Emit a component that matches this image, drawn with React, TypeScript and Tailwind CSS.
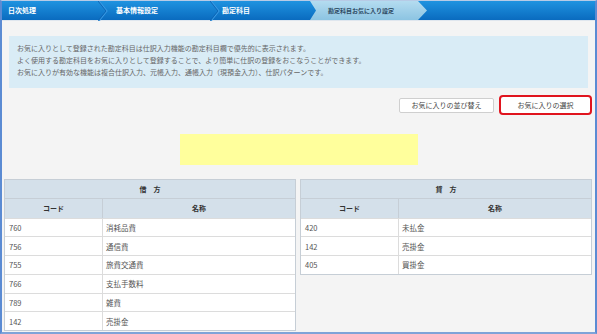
import React from "react";

const font = { fontFamily: '"Noto Sans CJK JP", "Noto Sans", sans-serif' };

function Sep() {
  return (
    <svg width="10" height="20" viewBox="0 0 10 20" className="shrink-0">
      <polyline points="1,0 9,10 1,20" fill="none" stroke="#3a9ae4" strokeWidth="1.2" />
      <polyline points="0,0 8,10 0,20" fill="none" stroke="#0a5fae" strokeWidth="0.8" />
    </svg>
  );
}

type Row = [string, string];

function AccTable({ title, rows }: { title: string; rows: Row[] }) {
  return (
    <div className="w-[292px] border border-[#c6ced6] bg-white text-[#444]">
      <div className="h-[19px] bg-[#d4e0ea] flex items-center justify-center text-[7px] font-bold text-[#333] border-b border-[#c6ced6]">
        {title}
      </div>
      <div className="h-[18.5px] bg-[#d4e0ea] flex text-[7px] font-bold text-[#333]">
        <div className="w-[98px] flex items-center justify-center border-r border-[#c6ced6]">コード</div>
        <div className="flex-1 flex items-center justify-center">名称</div>
      </div>
      {rows.map(([c, n], i) => (
        <div key={i} className="h-[18.75px] flex border-t border-[#dcdcdc] text-[7.5px] text-[#555]">
          <div className="w-[98px] flex items-center pl-[4px] border-r border-[#dcdcdc]">{c}</div>
          <div className="flex-1 flex items-center pl-[3px]">{n}</div>
        </div>
      ))}
    </div>
  );
}

export default function App() {
  const debit: Row[] = [
    ["760", "消耗品費"],
    ["756", "通信費"],
    ["755", "旅費交通費"],
    ["766", "支払手数料"],
    ["789", "雑費"],
    ["142", "売掛金"],
  ];
  const credit: Row[] = [
    ["420", "未払金"],
    ["142", "売掛金"],
    ["405", "買掛金"],
  ];
  return (
    <div style={font} className="w-[597px] h-[334px] overflow-hidden flex flex-col border-x-2 border-b-2 border-t border-x-[#5b8bd3] border-b-[#7fa3d8] border-t-[#b7cbe6] bg-[#f4f4f4]">
      <div className="h-[20px] shrink-0 flex items-stretch bg-gradient-to-b from-[#1f93e0] to-[#0a6bbf] text-white text-[7px] font-bold border-b border-[#dfe6ee]">
        <div className="w-[96px] pl-[6px] flex items-center">日次処理</div>
        <Sep />
        <div className="w-[102px] pl-[8px] flex items-center">基本情報設定</div>
        <Sep />
        <div className="w-[90px] pl-[2px] flex items-center">勘定科目</div>
        <div className="w-[117px] pl-[18px] flex items-center text-[6px] text-[#2d4a63] bg-gradient-to-b from-[#b4dcf0] to-[#8cc4e2] [clip-path:polygon(0_0,108px_0,117px_50%,108px_100%,0_100%,6px_50%)]">
          勘定科目お気に入り設定
        </div>
      </div>
      <div className="flex-1 flex flex-col">
        <div className="mt-[15px] mx-[7px] h-[52px] bg-[#d9ecf6] pt-[6px] pl-[8px] text-[7px] leading-[12px] text-[#666]">
          <div>お気に入りとして登録された勘定科目は仕訳入力機能の勘定科目欄で優先的に表示されます。</div>
          <div>よく使用する勘定科目をお気に入りとして登録することで、より簡単に仕訳の登録をおこなうことができます。</div>
          <div>お気に入りが有効な機能は複合仕訳入力、元帳入力、通帳入力（現預金入力）、仕訳パターンです。</div>
        </div>
        <div className="mt-[7px] flex justify-end items-center gap-[5px] pr-[3px]">
          <button className="w-[95px] h-[15px] bg-white border border-[#cfcfcf] rounded-[2px] text-[7px] text-[#444] flex items-center justify-center">
            お気に入りの並び替え
          </button>
          <button className="w-[93px] h-[20px] bg-white border-2 border-[#e0141e] rounded-[4px] text-[7px] text-[#444] flex items-center justify-center">
            お気に入りの選択
          </button>
        </div>
        <div className="mt-[19px] ml-[178px] w-[238px] h-[31px] bg-[#ffff9c]" />
        <div className="mt-[14px] ml-[2px] flex gap-[4px]">
          <AccTable title="借　方" rows={debit} />
          <div className="self-start">
            <AccTable title="貸　方" rows={credit} />
          </div>
        </div>
      </div>
    </div>
  );
}
